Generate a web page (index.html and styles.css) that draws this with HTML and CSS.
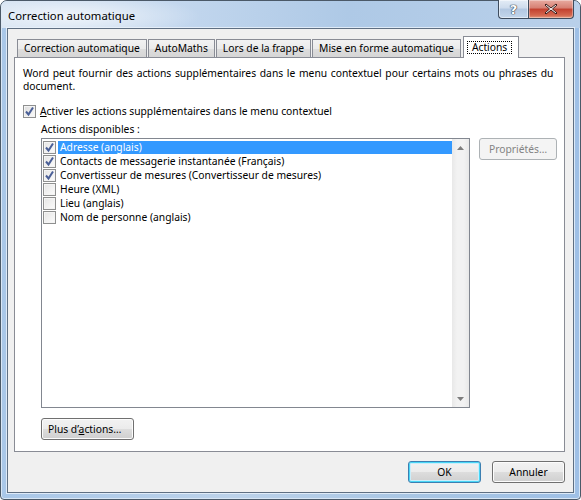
FILE: index.html
```html
<!DOCTYPE html>
<html lang="fr">
<head>
<meta charset="utf-8">
<title>Correction automatique</title>
<link rel="stylesheet" href="styles.css">
</head>
<body>
<div class="window">
  <div class="titlebar">
    <span class="title">Correction automatique</span>
    <div class="caption-btns">
      <div class="cbtn help"><span class="help-glyph">?</span></div>
      <div class="cbtn close">
        <svg width="14" height="12" viewBox="0 0 14 12"><path d="M2 1 L7 5 L12 1 L13 2 L8.5 6 L13 10 L12 11 L7 7 L2 11 L1 10 L5.5 6 L1 2 Z" fill="#fff" stroke="#3b1d1a" stroke-width="1" stroke-linejoin="round"/></svg>
      </div>
    </div>
  </div>
  <div class="client">
    <div class="tabs">
      <div class="tab">Correction automatique</div>
      <div class="tab">AutoMaths</div>
      <div class="tab">Lors de la frappe</div>
      <div class="tab">Mise en forme automatique</div>
      <div class="tab active"><span class="focus">Actions</span></div>
    </div>
    <div class="panel">
      <p class="intro">Word peut fournir des actions supplémentaires dans le menu contextuel pour certains mots ou phrases du document.</p>
      <div class="check-row">
        <span class="cb"><svg width="11" height="11" viewBox="0 0 11 11"><path d="M2 5.5 L4.5 8.5 L9 1.5" fill="none" stroke="#4a5f97" stroke-width="2"/></svg></span>
        <span><u>A</u>ctiver les actions supplémentaires dans le menu contextuel</span>
      </div>
      <div class="group">
        <div class="group-label">Actions disponibles :</div>
        <div class="list-row">
          <div class="listbox">
            <div class="items">
              <div class="item selected">
                <span class="cb small"><svg width="11" height="11" viewBox="0 0 11 11"><path d="M2 5.5 L4.5 8.5 L9 1.5" fill="none" stroke="#4a5f97" stroke-width="2"/></svg></span>
                <span class="label">Adresse (anglais)</span>
              </div>
              <div class="item">
                <span class="cb small"><svg width="11" height="11" viewBox="0 0 11 11"><path d="M2 5.5 L4.5 8.5 L9 1.5" fill="none" stroke="#4a5f97" stroke-width="2"/></svg></span>
                <span class="label">Contacts de messagerie instantanée (Français)</span>
              </div>
              <div class="item">
                <span class="cb small"><svg width="11" height="11" viewBox="0 0 11 11"><path d="M2 5.5 L4.5 8.5 L9 1.5" fill="none" stroke="#4a5f97" stroke-width="2"/></svg></span>
                <span class="label">Convertisseur de mesures (Convertisseur de mesures)</span>
              </div>
              <div class="item">
                <span class="cb small"></span>
                <span class="label">Heure (XML)</span>
              </div>
              <div class="item">
                <span class="cb small"></span>
                <span class="label">Lieu (anglais)</span>
              </div>
              <div class="item">
                <span class="cb small"></span>
                <span class="label">Nom de personne (anglais)</span>
              </div>
            </div>
            <div class="scrollbar">
              <div class="arrow"><svg width="7" height="4" viewBox="0 0 7 4"><path d="M0 4 L3.5 0 L7 4 Z" fill="#7d7d7d"/></svg></div>
              <div class="arrow"><svg width="7" height="4" viewBox="0 0 7 4"><path d="M0 0 L7 0 L3.5 4 Z" fill="#7d7d7d"/></svg></div>
            </div>
          </div>
          <button class="btn disabled props">Propriétés…</button>
        </div>
        <button class="btn more">Plus d’<u>a</u>ctions…</button>
      </div>
    </div>
    <div class="footer">
      <button class="btn default">OK</button>
      <button class="btn">Annuler</button>
    </div>
  </div>
</div>
</body>
</html>
```
FILE: styles.css
```css
* { box-sizing: border-box; }
html, body { margin: 0; padding: 0; }
body {
  width: 581px;
  height: 500px;
  overflow: hidden;
  font-family: "Noto Sans", "Open Sans", sans-serif;
  font-size: 10.3px;
  color: #000;
  background: #fff;
}
.window {
  width: 581px;
  height: 500px;
  display: flex;
  flex-direction: column;
  padding: 0 6px 6px 6px;
  border: 1px solid #4b5968;
  border-radius: 7px 7px 4px 4px;
  background: linear-gradient(90deg, #a9c7e8 0%, #bcd2ea 40%, #a9c6e4 70%, #9fc0e6 100%);
  box-shadow: inset 0 0 0 1px #d8e6f5;
}
.titlebar {
  height: 28px;
  display: flex;
  align-items: flex-start;
  justify-content: space-between;
  margin: 0 -6px 0 -6px;
  padding-left: 7px;
  background:
    radial-gradient(ellipse 130px 22px at 70px 15px, rgba(255,255,255,0.7), rgba(255,255,255,0) 100%),
    linear-gradient(90deg, #d3e1f1 0%, #c3d7ee 30%, #aec9e6 60%, #b9d0ea 100%);
  border-radius: 6px 6px 0 0;
}
.title {
  font-size: 11.3px;
  line-height: 14px;
  margin-top: 8px;
  color: #000;
}
.caption-btns {
  display: flex;
  margin-right: 6px;
  margin-top: -1px;
}
.cbtn {
  height: 19px;
  display: flex;
  align-items: center;
  justify-content: center;
  border: 1px solid #3e4c5e;
  border-top: none;
}
.help {
  width: 30px;
  border-radius: 0 0 0 4px;
  border-right: none;
  background: linear-gradient(#e3ecf6 0%, #cddbec 45%, #b2c7e1 50%, #c3d6ec 100%);
  box-shadow: inset 0 0 0 1px rgba(255,255,255,0.5);
}
.help-glyph {
  font-family: "DejaVu Sans", sans-serif;
  font-weight: bold;
  font-size: 13px;
  color: #fff;
  text-shadow: 0 0 1px #2c3a4a, 0 0 1px #2c3a4a, 0 0 1px #2c3a4a;
}
.close {
  width: 46px;
  border-radius: 0 0 4px 0;
  background: linear-gradient(#e8aba1 0%, #d67f72 45%, #c2402f 50%, #d4674f 85%, #e39a80 100%);
  box-shadow: inset 0 0 0 1px rgba(255,255,255,0.35);
}
.client {
  flex: 1;
  display: flex;
  flex-direction: column;
  border: 1px solid #5f6f82;
  background: #f0f0f0;
  padding: 7px 8px 9px 6px;
  box-shadow: 0 0 0 1px rgba(235,243,251,0.8);
}
.tabs {
  display: flex;
  align-items: flex-end;
  height: 21px;
  padding-left: 3px;
  gap: 1px;
  position: relative;
  z-index: 1;
}
.tab {
  height: 18px;
  padding: 0 6px;
  line-height: 16px;
  border: 1px solid #898c95;
  border-bottom: none;
  background: linear-gradient(#f2f2f2 0%, #ebebeb 50%, #dddddd 51%, #d6d6d6 100%);
  white-space: nowrap;
}
.tab.active {
  height: 22px;
  margin-left: 1px;
  margin-bottom: -1px;
  background: #fff;
  padding: 4px 6px 0 3px;
  line-height: 13px;
}
.focus {
  display: block;
  height: 13px;
  outline: 1px dotted #000;
  outline-offset: -1px;
  padding: 0 5px;
}
.panel {
  height: 395px;
  border: 1px solid #898c95;
  background: #fff;
  padding: 9px 4px 0 8px;
  display: flex;
  flex-direction: column;
}
.intro {
  margin: 0;
  line-height: 13px;
  word-spacing: 1px;
}
.check-row {
  display: flex;
  align-items: center;
  gap: 4px;
  margin-top: 11px;
  height: 14px;
}
.cb {
  width: 13px;
  height: 13px;
  flex: none;
  border: 1px solid #8e8f8f;
  background: linear-gradient(135deg, #dcdcdc, #fbfbfb);
  box-shadow: inset 0 0 0 1px #f4f4f4;
  display: flex;
  align-items: center;
  justify-content: center;
}
.group {
  padding-left: 18px;
  display: flex;
  flex-direction: column;
  align-items: flex-start;
}
.group-label {
  margin-top: 4px;
  line-height: 14px;
}
.list-row {
  display: flex;
  align-items: flex-start;
  gap: 9px;
  margin-top: 2px;
}
.listbox {
  width: 429px;
  height: 270px;
  border: 1px solid #828790;
  display: flex;
  background: #fff;
}
.items {
  flex: 1;
  padding: 1px 0 0 1px;
}
.item {
  height: 14px;
  display: flex;
  align-items: center;
}
.item .label {
  height: 13px;
  line-height: 13px;
  padding: 0 2px;
  margin-left: 2px;
  flex: 1;
  white-space: nowrap;
}
.item.selected .label {
  background: #3399ff;
  color: #fff;
}
.cb.small {
  background: linear-gradient(135deg, #e4e4e4, #fcfcfc);
}
.scrollbar {
  width: 17px;
  display: flex;
  flex-direction: column;
  justify-content: space-between;
  background: linear-gradient(90deg, #e8e8e8, #f2f2f2 30%, #f2f2f2 70%, #e8e8e8);
}
.arrow {
  height: 17px;
  display: flex;
  align-items: center;
  justify-content: center;
}
.btn {
  font: inherit;
  font-size: 10.3px;
  color: #000;
  height: 22px;
  padding: 0 6px;
  border: 1px solid #707070;
  border-radius: 3px;
  background: linear-gradient(#f2f2f2 0%, #ebebeb 50%, #dddddd 51%, #cfcfcf 100%);
  box-shadow: inset 0 0 0 1px #fcfcfc;
  line-height: 18px;
}
.btn.disabled {
  color: #838383;
  border-color: #adb2b5;
  background: #f4f4f4;
  box-shadow: none;
}
.props {
  width: 78px;
}
.more {
  margin-top: 10px;
  width: 93px;
  text-align: left;
  padding-left: 6px;
}
.footer {
  display: flex;
  justify-content: flex-end;
  gap: 11px;
  margin-top: 9px;
}
.footer .btn {
  width: 73px;
}
.btn.default {
  border-color: #3c7fb1;
  box-shadow: inset 0 0 0 1px #48d6f6, inset 0 0 0 2px #c9eefb;
}
```
